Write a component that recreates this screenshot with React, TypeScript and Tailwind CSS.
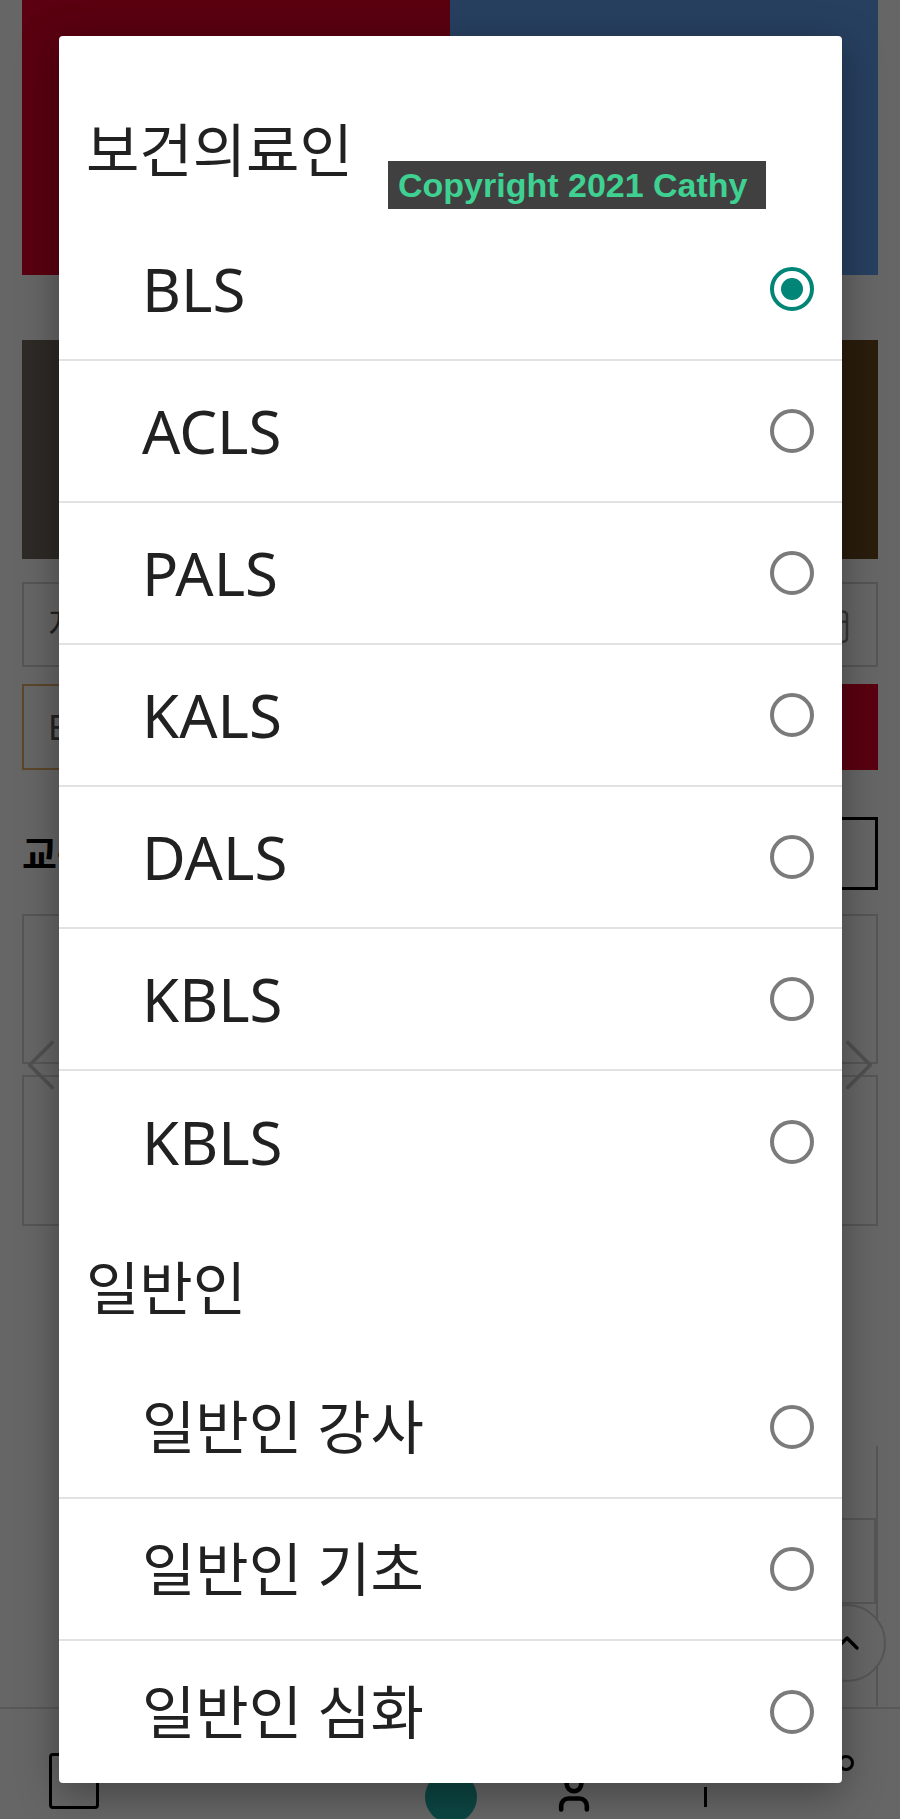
import { Calendar, ChevronLeft, ChevronRight, ChevronUp, User } from 'lucide-react';

const groups = [
  { title: '보건의료인', items: ['BLS', 'ACLS', 'PALS', 'KALS', 'DALS', 'KBLS', 'KBLS'] },
  { title: '일반인', items: ['일반인 강사', '일반인 기초', '일반인 심화'] },
];

const font = { fontFamily: '"Noto Sans", "Noto Sans CJK KR", sans-serif' };

function Radio({ checked }: { checked: boolean }) {
  if (checked) {
    return (
      <span className="w-[44px] h-[44px] rounded-full border-[4px] border-[#008577] flex items-center justify-center shrink-0">
        <span className="w-[22px] h-[22px] rounded-full bg-[#008577]" />
      </span>
    );
  }
  return <span className="w-[44px] h-[44px] rounded-full border-[4px] border-[#7b7b7b] shrink-0" />;
}

function Page() {
  return (
    <div className="h-[1819px] flex flex-col bg-white" style={font}>
      <div className="px-[22px]">
        <div className="flex h-[275px]">
          <div className="flex-1 bg-[#e2002a]" />
          <div className="flex-1 bg-[#62a0f0]" />
        </div>
        <div className="mt-[65px] h-[219px] bg-gradient-to-r from-[#746c62] via-[#3c3630] to-[#6a4a1e]" />
        <div className="mt-[23px] h-[85px] border-2 border-[#d4d4d4] flex items-center justify-between px-[24px]">
          <span className="text-[34px] text-[#555]">지역</span>
          <Calendar size={40} strokeWidth={1.5} className="text-[#888]" />
        </div>
        <div className="mt-[17px] h-[86px] flex gap-[10px]">
          <div className="flex-1 border-2 border-[#e3b06a] flex items-center px-[24px] text-[34px] text-[#555]">E</div>
          <div className="w-[300px] bg-[#e2002a]" />
        </div>
        <div className="mt-[47px] h-[73px] flex items-center justify-between">
          <span className="text-[38px] font-bold text-black">교육</span>
          <div className="w-[220px] h-[73px] border-[3px] border-black" />
        </div>
        <div className="relative">
          <div className="mt-[24px] h-[150px] border-2 border-[#d8d8d8]" />
          <div className="mt-[11px] h-[151px] border-2 border-[#d8d8d8]" />
          <ChevronLeft size={90} strokeWidth={1} className="absolute -left-[26px] top-[106px] text-[#c8c8c8]" />
          <ChevronRight size={90} strokeWidth={1} className="absolute -right-[26px] top-[106px] text-[#c8c8c8]" />
        </div>
        <div className="mt-[220px] h-[260px] flex justify-end">
          <div className="w-[44px] border-r-2 border-[#d8d8d8] flex flex-col pt-[72px]">
            <div className="h-[86px] border-2 border-[#d8d8d8]" />
          </div>
        </div>
      </div>
      <div className="relative mt-auto h-[112px] border-t-2 border-[#dcdcdc] bg-white">
        <div className="absolute left-[49px] top-[44px] w-[50px] h-[56px] border-[3px] border-black rounded-[4px]" />
        <div className="absolute left-[425px] top-[62px] w-[52px] h-[52px] rounded-full bg-[#20b0a8]" />
        <User size={44} strokeWidth={2.5} className="absolute left-[552px] top-[62px] text-black" />
        <div className="absolute left-[704px] top-[78px] w-[3px] h-[20px] bg-black" />
        <div className="absolute left-[838px] top-[46px] w-[16px] h-[16px] rounded-full border-[3px] border-black" />
      </div>
    </div>
  );
}

export default function App() {
  return (
    <div className="relative w-[900px] h-[1819px] overflow-hidden">
      <Page />
      <div className="absolute right-[14px] top-[1604px] w-[78px] h-[78px] rounded-full bg-white border-2 border-[#d4d4d4] flex items-center justify-center">
        <ChevronUp size={40} strokeWidth={2} className="text-black" />
      </div>
      <div className="absolute inset-0 bg-black/60" />

      <div
        className="absolute left-[59px] top-[36px] w-[783px] h-[1747px] bg-white rounded-[4px] shadow-[0_10px_40px_rgba(0,0,0,0.35)] pt-[39px] text-[#212121]"
        style={font}
      >
        {groups.map((g) => (
          <div key={g.title}>
            <div className="pl-[27px] pt-[46px] pb-[40px] text-[58px] leading-[58px]">{g.title}</div>
            {g.items.map((label, i) => {
              const korean = /[가-힣]/.test(label);
              const last = i === g.items.length - 1;
              return (
                <div
                  key={i}
                  className={`h-[142px] flex items-center justify-between pl-[83px] pr-[28px] ${last ? '' : 'border-b-2 border-[#e2e2e2]'}`}
                >
                  <span className={korean ? 'text-[58px] leading-none' : 'text-[60px] leading-none'}>{label}</span>
                  <Radio checked={g.title === '보건의료인' && i === 0} />
                </div>
              );
            })}
          </div>
        ))}
      </div>

      <div className="absolute left-[388px] top-[161px] w-[378px] h-[48px] bg-[#404040] flex items-center pl-[10px]">
        <span className="text-[34px] font-bold text-[#3ed192] leading-none" style={{ fontFamily: '"Liberation Sans", Arial, sans-serif' }}>
          Copyright 2021 Cathy
        </span>
      </div>
    </div>
  );
}
